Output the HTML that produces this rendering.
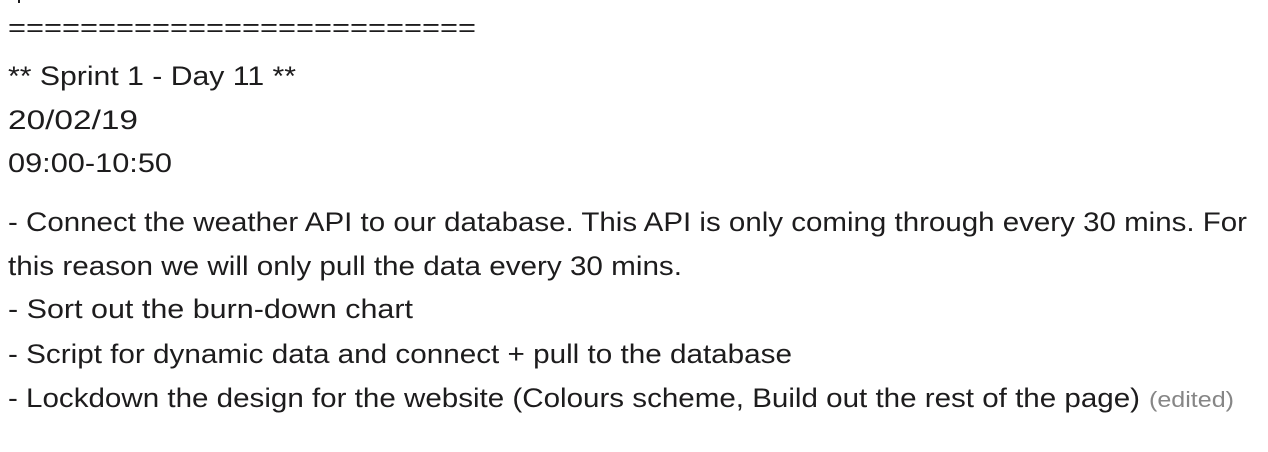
<!DOCTYPE html>
<html><head><meta charset="utf-8"><style>
html,body{margin:0;padding:0;background:#fff;width:1268px;height:452px;overflow:hidden}
svg{display:block}
text{font-family:"Liberation Sans",sans-serif;font-size:27px;fill:#1d1c1d}
</style></head><body>
<svg width="1268" height="452" viewBox="0 0 1268 452">
<rect x="18" y="0" width="2" height="3" fill="#1d1c1d"/>
<text x="8" y="36" textLength="468" lengthAdjust="spacingAndGlyphs" style="font-size:25px">==========================</text>
<text x="8" y="85" textLength="288" lengthAdjust="spacingAndGlyphs">** Sprint 1 - Day 11 **</text>
<text x="8" y="129" textLength="130" lengthAdjust="spacingAndGlyphs">20/02/19</text>
<text x="8" y="172" textLength="164" lengthAdjust="spacingAndGlyphs">09:00-10:50</text>
<text x="8" y="231" textLength="1239" lengthAdjust="spacingAndGlyphs">- Connect the weather API to our database. This API is only coming through every 30 mins. For</text>
<text x="8" y="275" textLength="674" lengthAdjust="spacingAndGlyphs">this reason we will only pull the data every 30 mins.</text>
<text x="8" y="318" textLength="405" lengthAdjust="spacingAndGlyphs">- Sort out the burn-down chart</text>
<text x="8" y="363" textLength="784" lengthAdjust="spacingAndGlyphs">- Script for dynamic data and connect + pull to the database</text>
<text x="8" y="407" textLength="1132" lengthAdjust="spacingAndGlyphs">- Lockdown the design for the website (Colours scheme, Build out the rest of the page)</text>
<text x="1149" y="407" textLength="85" lengthAdjust="spacingAndGlyphs" style="font-size:22px;fill:#868686">(edited)</text>
</svg>
</body></html>
